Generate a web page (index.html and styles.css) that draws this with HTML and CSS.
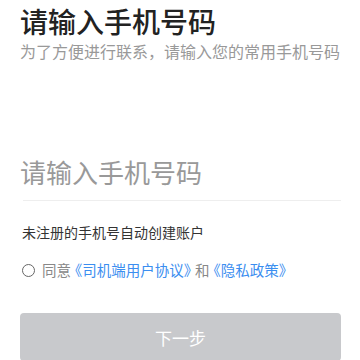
FILE: index.html
```html
<!DOCTYPE html>
<html lang="zh-CN">
<head>
    <meta charset="UTF-8"/>
    <title>登录</title>
    <link rel="stylesheet" href="styles.css">
</head>
<body>
<main class="login">
    <h1 class="title">请输入手机号码</h1>
    <p class="subtitle">为了方便进行联系，请输入您的常用手机号码</p>
    <div class="phone-field">
        <input type="tel" class="phone-input" placeholder="请输入手机号码">
    </div>
    <p class="tip">未注册的手机号自动创建账户</p>
    <label class="agree">
        <span class="radio"></span>
        <span>同意<a href="#">《司机端用户协议》</a>和<a href="#">《隐私政策》</a></span>
    </label>
    <button class="next-button" disabled>下一步</button>
</main>
</body>
</html>
```

FILE: styles.css
```css
body {
    margin: 0;
    background-color: #fff;
    font-family: "Noto Sans CJK SC", "Noto Sans", sans-serif;
}

.login {
    padding: 0 19px 0 20px;
}

.title {
    margin: 0;
    padding-top: 3px;
    font-size: 28px;
    line-height: 36px;
    font-weight: 500;
    color: #222;
}

.subtitle {
    margin: 1px 0 0;
    font-size: 16px;
    line-height: 22px;
    color: #999;
}

.phone-field {
    margin-top: 92px;
    border-bottom: 1px solid #eee;
    margin-left: 3px;
}

.phone-input {
    display: block;
    width: 100%;
    box-sizing: border-box;
    border: none;
    outline: none;
    padding: 0 0 10px;
    margin-left: -3px;
    font-family: inherit;
    font-size: 26px;
    line-height: 36px;
    color: #333;
    background: transparent;
}

.phone-input::placeholder {
    color: #999;
}

.tip {
    margin: 21px 0 0 2px;
    font-size: 14px;
    line-height: 20px;
    color: #333;
}

.agree {
    display: flex;
    align-items: center;
    margin: 18px 0 0 2px;
    font-size: 14.5px;
    line-height: 20px;
    color: #888;
    font-feature-settings: "halt";
}

.agree a {
    margin: 0 4px;
    color: #3b8ef0;
    text-decoration: none;
}

.radio {
    width: 11px;
    height: 11px;
    border: 1.5px solid #666;
    border-radius: 50%;
    margin-right: 7px;
}

.next-button {
    display: block;
    width: 100%;
    height: 48px;
    margin-top: 33px;
    border: none;
    border-radius: 4px;
    background-color: #c8c9cc;
    color: #fff;
    font-family: inherit;
    font-size: 17px;
}
```
